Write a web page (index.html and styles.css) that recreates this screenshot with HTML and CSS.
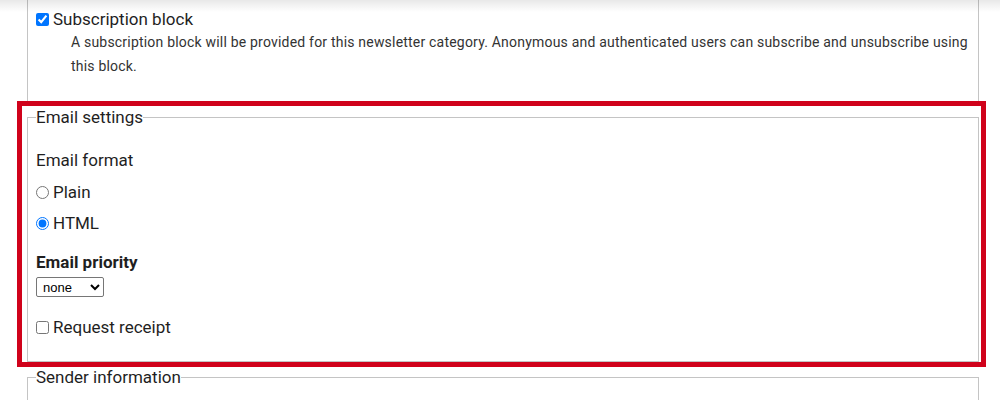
FILE: index.html
```html
<!DOCTYPE html>
<html>
<head>
<meta charset="utf-8">
<link rel="stylesheet" href="styles.css">
</head>
<body>
<div class="page">
  <fieldset class="box box-open">
    <label class="check-row">
      <input type="checkbox" checked>
      <span>Subscription block</span>
    </label>
    <div class="description">A subscription block will be provided for this newsletter category. Anonymous and authenticated users can subscribe and unsubscribe using this block.</div>
  </fieldset>

  <fieldset class="box box-email">
    <legend>Email settings</legend>
    <div class="field-label">Email format</div>
    <label class="radio-row first">
      <input type="radio" name="fmt">
      <span>Plain</span>
    </label>
    <label class="radio-row">
      <input type="radio" name="fmt" checked>
      <span>HTML</span>
    </label>
    <div class="bold-label">Email priority</div>
    <select class="priority">
      <option>none</option>
      <option>highest</option>
      <option>high</option>
      <option>normal</option>
      <option>low</option>
      <option>lowest</option>
    </select>
    <label class="check-row receipt">
      <input type="checkbox">
      <span>Request receipt</span>
    </label>
  </fieldset>

  <fieldset class="box box-sender">
    <legend>Sender information</legend>
  </fieldset>
</div>
<div class="top-shadow"></div>
<div class="highlight"></div>
</body>
</html>
```

FILE: styles.css
```css
html, body {
  margin: 0;
  padding: 0;
  background: #ffffff;
  overflow: hidden;
}

body {
  font-family: Roboto, "Liberation Sans", Arial, sans-serif;
  color: #1f1f1f;
  font-size: 17px;
  width: 1000px;
  height: 400px;
  position: relative;
}

.page {
  padding-left: 27px;
  width: 952px;
}

.box {
  margin: 0;
  border: 1px solid #c4c4c4;
  padding: 0 8px;
  min-width: 0;
}

.box legend {
  padding: 0;
  margin-left: 0;
  font-size: 17px;
  line-height: 18px;
  color: #1f1f1f;
}

.box-open {
  border-top: none;
  padding-top: 7px;
  padding-bottom: 23px;
}

.check-row,
.radio-row {
  display: flex;
  align-items: center;
  line-height: 24px;
  font-size: 17px;
}

.check-row input,
.radio-row input {
  width: 13px;
  height: 13px;
  margin: 0 4px 0 0;
  accent-color: #0075ff;
}

.description {
  margin-left: 35px;
  font-size: 14px;
  line-height: 24px;
  color: #333333;
  margin-top: -1px;
  letter-spacing: 0.2px;
}

.box-email {
  margin-top: 6px;
  padding-top: 22px;
  padding-bottom: 22px;
}

.field-label {
  line-height: 24px;
}

.radio-row.first {
  margin-top: 8px;
}

.radio-row + .radio-row {
  margin-top: 7px;
}

.bold-label {
  font-weight: bold;
  line-height: 24px;
  margin-top: 15px;
}

.priority {
  display: block;
  margin-top: 3px;
  height: 20px;
  width: 68px;
  font-family: "Liberation Sans", Arial, sans-serif;
  font-size: 13px;
  padding: 0 0 0 2px;
  border: 1px solid #767676;
  border-radius: 2px;
  background: #ffffff;
  color: #000;
}

.receipt {
  margin-top: 18px;
}

.box-sender {
  margin-top: 6px;
  height: 40px;
  border-bottom: none;
}

.top-shadow {
  position: absolute;
  left: 0;
  top: 0;
  width: 1000px;
  height: 12px;
  background: linear-gradient(to bottom, rgba(0,0,0,0.09), rgba(0,0,0,0));
  pointer-events: none;
}

.highlight {
  position: absolute;
  left: 17px;
  top: 101px;
  width: 959px;
  height: 256px;
  border: 5px solid #d0021b;
  pointer-events: none;
}
```
